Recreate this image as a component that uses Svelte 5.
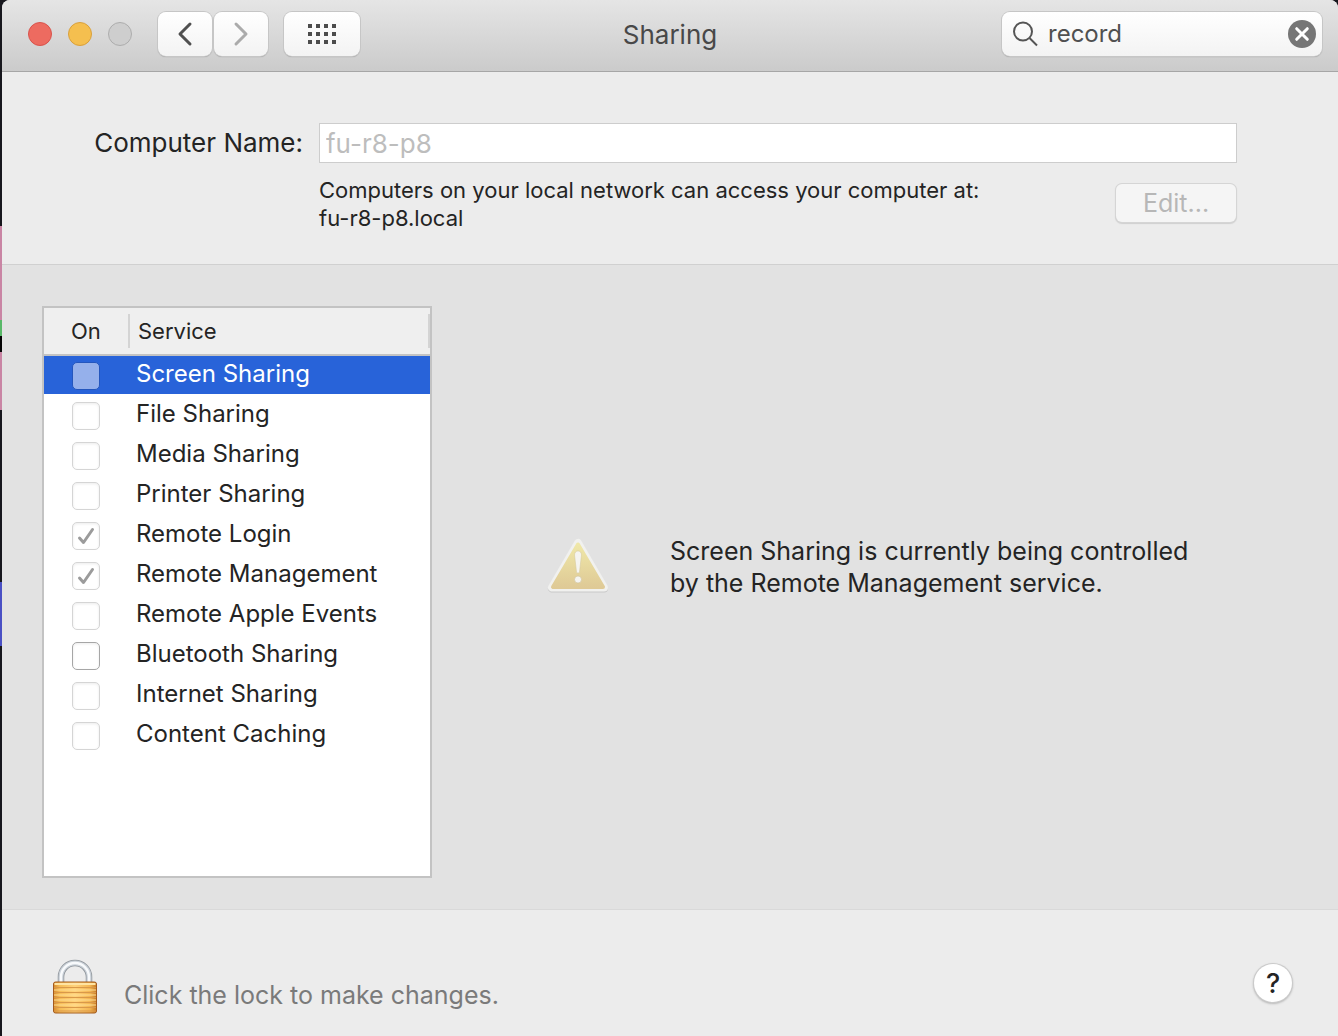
<script>
  let services = $state([
    { id: 'screen', name: 'Screen Sharing', on: false, disabled: true },
    { id: 'file', name: 'File Sharing', on: false, disabled: true },
    { id: 'media', name: 'Media Sharing', on: false, disabled: true },
    { id: 'printer', name: 'Printer Sharing', on: false, disabled: true },
    { id: 'login', name: 'Remote Login', on: true, disabled: true },
    { id: 'management', name: 'Remote Management', on: true, disabled: true },
    { id: 'events', name: 'Remote Apple Events', on: false, disabled: true },
    { id: 'bluetooth', name: 'Bluetooth Sharing', on: false, disabled: false },
    { id: 'internet', name: 'Internet Sharing', on: false, disabled: true },
    { id: 'caching', name: 'Content Caching', on: false, disabled: true }
  ]);
  let selected = $state('screen');
  let query = $state('record');
  const dots = [0, 8, 16, 24];
  const dotRows = [0, 8, 16];
  const ridges = [32, 37, 42, 47];
</script>

<div class="desktop">
  <div class="window">
    <header class="titlebar">
      <div class="tools">
        <div class="lights">
          <button class="light close" aria-label="Close"></button>
          <button class="light minimize" aria-label="Minimize"></button>
          <button class="light zoom" aria-label="Zoom" disabled></button>
        </div>
        <div class="nav">
          <button class="tool" aria-label="Back">
            <svg width="16" height="26" viewBox="0 0 16 26"><path d="M13 3 3 13l10 10" fill="none" stroke="#505050" stroke-width="3" stroke-linecap="round" stroke-linejoin="round" /></svg>
          </button>
          <button class="tool" aria-label="Forward" disabled>
            <svg width="16" height="26" viewBox="0 0 16 26"><path d="M3 3l10 10L3 23" fill="none" stroke="#ababab" stroke-width="3" stroke-linecap="round" stroke-linejoin="round" /></svg>
          </button>
        </div>
        <button class="tool all" aria-label="Show All">
          <svg width="28" height="20" viewBox="0 0 28 20" fill="#4c4c4c">
            {#each dotRows as y}
              {#each dots as x}
                <rect {x} {y} width="4" height="4" />
              {/each}
            {/each}
          </svg>
        </button>
      </div>
      <h1>Sharing</h1>
      <div class="search">
        <svg width="26" height="26" viewBox="0 0 26 26" fill="none" stroke="#555" stroke-width="2"><circle cx="11" cy="10.500" r="9" /><path d="m17.500 17 7.500 7.500" /></svg>
        <input type="text" aria-label="Search" bind:value={query} />
        <button class="clear" aria-label="Clear search" onclick={() => (query = '')}>
          <svg width="28" height="28" viewBox="0 0 28 28"><circle cx="14" cy="14" r="14" fill="#767676" /><path d="m8.700 8.700 10.600 10.600m0-10.600L8.700 19.300" stroke="#fff" stroke-width="3" stroke-linecap="round" /></svg>
        </button>
      </div>
    </header>

    <section class="identity">
      <label for="computer-name">Computer Name:</label>
      <input id="computer-name" type="text" value="fu-r8-p8" disabled />
      <div class="address">
        <p>Computers on your local network can access your computer at:<br />fu-r8-p8.local</p>
        <button class="edit" disabled>Edit...</button>
      </div>
    </section>

    <main>
      <div class="list">
        <table>
          <thead>
            <tr><th class="on" scope="col"><span>On</span></th><th scope="col"><span>Service</span></th></tr>
          </thead>
          <tbody>
            {#each services as service (service.id)}
              <tr class:selected={selected === service.id} onclick={() => (selected = service.id)}>
                <td class="on">
                  <span class="check">
                    <input type="checkbox" id={service.id} bind:checked={service.on} disabled={service.disabled} />
                    {#if service.on}
                      <svg width="28" height="28" viewBox="0 0 28 28"><path d="m7.500 16 4 4.500L20.500 7.500" fill="none" stroke="#9b9b9b" stroke-width="3" stroke-linecap="round" stroke-linejoin="round" /></svg>
                    {/if}
                  </span>
                </td>
                <td><label for={service.id}>{service.name}</label></td>
              </tr>
            {/each}
          </tbody>
        </table>
      </div>
      <div class="message">
        <svg width="64" height="58" viewBox="0 0 64 58" aria-hidden="true">
          <defs>
            <linearGradient id="amber" x1="0" y1="0" x2="0" y2="1"><stop offset="0" stop-color="#efe7a8" /><stop offset="1" stop-color="#dfca96" /></linearGradient>
          </defs>
          <path d="M32 6 6 50.500h52Z" fill="#c8c8c8" stroke="#c8c8c8" stroke-width="8" stroke-linejoin="round" />
          <path d="M32 5 6 49.500h52Z" fill="#f1f1ef" stroke="#f1f1ef" stroke-width="8" stroke-linejoin="round" />
          <path d="M32 6.500 7 49h50Z" fill="url(#amber)" stroke="url(#amber)" stroke-width="4" stroke-linejoin="round" />
          <path d="M28.500 17c0-5.500 7-5.500 7 0L33.500 34c-.2 1.600-2.800 1.600-3 0Z" fill="#f5f4f0" stroke="#d7cba0" stroke-width=".6" />
          <circle cx="32" cy="41.500" r="3.500" fill="#f5f4f0" stroke="#cfc198" stroke-width=".6" />
        </svg>
        <p>Screen Sharing is currently being controlled<br />by the Remote Management service.</p>
      </div>
    </main>

    <footer>
      <button class="lock" id="lock" aria-label="Unlock">
        <svg width="46" height="56" viewBox="0 0 46 56">
          <defs>
            <linearGradient id="brass" x1="0" y1="0" x2="1" y2="0"><stop offset="0" stop-color="#d58a2c" /><stop offset=".15" stop-color="#f6bd57" /><stop offset=".5" stop-color="#ffd27a" /><stop offset=".85" stop-color="#f3b551" /><stop offset="1" stop-color="#c67a24" /></linearGradient>
          </defs>
          <path d="M9 25V18a14 14 0 0 1 28 0v7" fill="none" stroke="#8d9399" stroke-width="6.500" />
          <path d="M9 25V18a14 14 0 0 1 28 0v7" fill="none" stroke="#c9d0d7" stroke-width="5" />
          <path d="M9 25V18a14 14 0 0 1 28 0v7" fill="none" stroke="#f8fafc" stroke-width="2.400" />
          <rect x="1.500" y="23" width="43" height="31" rx="2" fill="url(#brass)" stroke="#a35a1d" />
          <path d="M2.500 25h41" stroke="#ffe4a2" stroke-width="2" />
          {#each ridges as y}
            <path d="M2 {y - 3.500}h42" stroke="#d9984a" stroke-width="1.200" />
            <path d="M2 {y - 1}h42" stroke="#ffe095" stroke-width="1.200" />
          {/each}
          <path d="M2 48.500h42M2 52h42" stroke="#d9984a" stroke-width="1.200" />
        </svg>
      </button>
      <label class="hint" for="lock">Click the lock to make changes.</label>
      <button class="help" aria-label="Help">?</button>
    </footer>
  </div>
</div>

<style>
  :global(body) {
    background: #17171d;
  }
  :global(#app) {
    font-family: Inter, 'Liberation Sans', sans-serif;
    color: #242424;
  }
  * {
    box-sizing: border-box;
  }
  button,
  input {
    font: inherit;
    color: inherit;
    margin: 0;
    padding: 0;
    border: 0;
  }
  p,
  h1 {
    margin: 0;
  }
  svg {
    display: block;
    flex: none;
  }
  .desktop {
    min-height: 100vh;
    display: flex;
    padding-left: 2px;
    background: linear-gradient(#17171d 226px, #c985a4 226px 320px, #58b868 320px 336px, #050505 336px 352px, #c985a4 352px 410px, #17171d 410px 582px, #4a50c4 582px 646px, #17171d 646px);
  }
  .window {
    flex: 1;
    min-width: 0;
    display: flex;
    flex-direction: column;
    background: #ececec;
    border-radius: 8px 8px 0 0;
    overflow: hidden;
  }
  .titlebar {
    display: grid;
    grid-template-columns: 1fr auto 1fr;
    align-items: center;
    height: 72px;
    padding: 0 16px 4px 26px;
    background: linear-gradient(#e5e5e5, #cbcbcb);
    border-bottom: 1px solid #a6a6a6;
  }
  .tools {
    display: flex;
    align-items: center;
  }
  .lights {
    display: flex;
    gap: 16px;
    margin-right: 26px;
  }
  .light {
    width: 24px;
    height: 24px;
    border-radius: 50%;
    border: 1px solid;
  }
  .close {
    background: #ed6b60;
    border-color: #d9534c;
  }
  .minimize {
    background: #f5bf4f;
    border-color: #d9a03c;
  }
  .zoom {
    background: #cecece;
    border-color: #adadad;
  }
  .nav {
    display: flex;
    gap: 2px;
    margin-right: 16px;
  }
  .tool {
    display: flex;
    align-items: center;
    justify-content: center;
    width: 54px;
    height: 44px;
    border-radius: 8px;
    background: linear-gradient(#fff, #f3f3f3);
    box-shadow: 0 0 0 1px #c6c6c6, 0 1px 1px #8f8f8f;
  }
  .all {
    width: 76px;
  }
  h1 {
    font-size: 26px;
    line-height: 32px;
    font-weight: 400;
    color: #484848;
    padding-top: 2px;
    padding-right: 10px;
  }
  .search {
    justify-self: end;
    display: flex;
    align-items: center;
    gap: 10px;
    width: 320px;
    height: 44px;
    padding: 0 6px 0 10px;
    border-radius: 8px;
    background: linear-gradient(#fff, #f3f3f3);
    box-shadow: 0 0 0 1px #c6c6c6, 0 1px 1px #8f8f8f;
  }
  .search input {
    flex: 1;
    min-width: 0;
    background: none;
    font-size: 24px;
    line-height: 32px;
    color: #505050;
    outline: 0;
  }
  .clear {
    background: none;
  }
  .identity {
    display: grid;
    grid-template-columns: 263px 1fr;
    column-gap: 16px;
    padding: 51px 101px 32px 38px;
    border-bottom: 1px solid #d0d0d0;
  }
  .identity > label {
    justify-self: end;
    font-size: 26px;
    line-height: 40px;
    white-space: nowrap;
  }
  .identity > input {
    width: 100%;
    height: 40px;
    padding: 0 6px;
    border: 1px solid #cdcdcd;
    background: #fff;
    font-size: 26px;
    color: #bdbdbd;
  }
  .address {
    grid-column: 2;
    display: flex;
    justify-content: space-between;
    padding-top: 13px;
  }
  .address p {
    font-size: 22px;
    line-height: 28px;
  }
  .edit {
    width: 120px;
    height: 38px;
    margin: 8px 1px 0 0;
    border-radius: 6px;
    background: #f5f5f5;
    box-shadow: 0 0 0 1px #d5d5d5, 0 1px 1px 1px #d0d0d0;
    font-size: 25px;
    color: #b7b7b7;
  }
  main {
    display: flex;
    padding: 41px 40px 31px;
    background: #e2e2e2;
    border-bottom: 1px solid #d9d9d9;
  }
  .list {
    width: 390px;
    min-height: 572px;
    flex: none;
    border: 2px solid #c3c3c3;
    background: #fff;
  }
  table {
    width: 100%;
    table-layout: fixed;
    border-collapse: separate;
    border-spacing: 0;
  }
  th {
    height: 48px;
    padding: 0 0 1px;
    background: #efefef;
    border-bottom: 2px solid #c3c3c3;
    font-size: 22px;
    line-height: 34px;
    font-weight: 400;
    text-align: left;
  }
  th span {
    display: block;
    padding-left: 8px;
    border-right: 2px solid #d4d4d4;
  }
  .on {
    width: 86px;
  }
  th.on span {
    padding-left: 27px;
  }
  td {
    height: 40px;
    padding: 0 0 4px;
    vertical-align: bottom;
    font-size: 24px;
    line-height: 32px;
  }
  tbody tr:first-child td {
    height: 38px;
  }
  td label {
    display: block;
    padding-left: 6px;
  }
  td.on {
    padding-left: 28px;
  }
  .check {
    display: grid;
    width: 28px;
    height: 28px;
  }
  .check > * {
    grid-area: 1 / 1;
  }
  .check svg {
    pointer-events: none;
  }
  .check input {
    appearance: none;
    width: 28px;
    height: 28px;
    border: 1px solid #d5d5d5;
    border-radius: 5px;
    background: #fff;
    box-shadow: inset 0 1px 3px #ececec;
  }
  .check input:enabled {
    border-color: #a6a6a6;
  }
  .selected {
    background: #2863d9;
    color: #fff;
  }
  .selected .check input {
    background: #95b0eb;
    border-color: #2456bd;
    box-shadow: none;
  }
  .message {
    flex: 1;
    display: flex;
    align-items: center;
    align-self: flex-start;
    gap: 60px;
    padding: 229px 0 0 114px;
  }
  .message p {
    font-size: 25px;
    font-weight: 425;
    line-height: 32px;
  }
  footer {
    display: flex;
    align-items: flex-start;
    padding: 49px 46px 20px 50px;
  }
  .lock {
    background: none;
  }
  .hint {
    flex: 1;
    margin-left: 26px;
    padding-top: 20px;
    font-size: 25px;
    font-weight: 425;
    line-height: 32px;
    color: #7a7a7a;
  }
  .help {
    width: 38px;
    height: 38px;
    margin-top: 5px;
    border-radius: 50%;
    background: #fff;
    box-shadow: 0 0 0 1px #cbcbcb, 0 1px 2px 1px #bababa;
    font-size: 27px;
    line-height: 40px;
    font-weight: 500;
  }
</style>
